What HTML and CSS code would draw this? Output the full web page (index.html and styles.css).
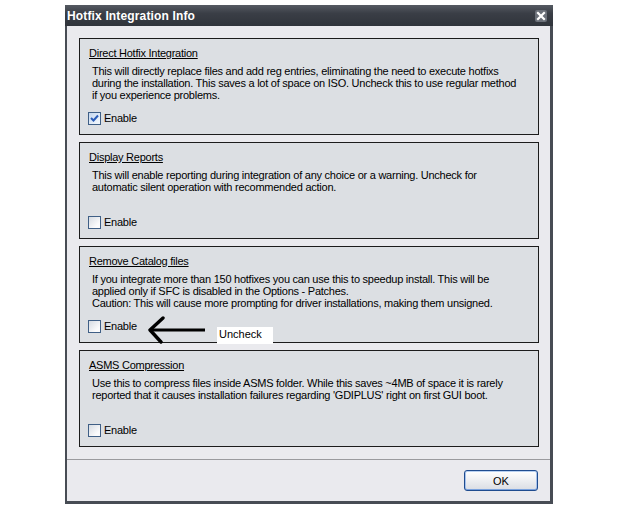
FILE: index.html
```html
<!DOCTYPE html>
<html>
<head>
<meta charset="utf-8">
<link rel="stylesheet" href="styles.css">
</head>
<body>
<div class="window">
  <div class="titlebar">
    <span class="title">Hotfix Integration Info</span>
    <span class="close"><svg width="12" height="12" viewBox="0 0 12 12"><path d="M3 3 L9 9 M9 3 L3 9" stroke="#fff" stroke-width="2.2" stroke-linecap="square"/></svg></span>
  </div>
  <div class="client">
    <div class="groups">
      <section class="group">
        <div class="group-title">Direct Hotfix Integration</div>
        <p class="desc">This will directly replace files and add reg entries, eliminating the need to execute hotfixs<br>during the installation. This saves a lot of space on ISO. Uncheck this to use regular method<br>if you experience problems.</p>
        <div class="check"><span class="cbox checked"><svg width="11" height="11" viewBox="0 0 11 11"><path d="M2 5 L4.5 7.5 L9 2.5" fill="none" stroke="#2a5cb8" stroke-width="2"/></svg></span><span>Enable</span></div>
      </section>
      <section class="group">
        <div class="group-title">Display Reports</div>
        <p class="desc">This will enable reporting during integration of any choice or a warning. Uncheck for<br>automatic silent operation with recommended action.</p>
        <div class="check"><span class="cbox"></span><span>Enable</span></div>
      </section>
      <section class="group annotated">
        <div class="group-title">Remove Catalog files</div>
        <p class="desc">If you integrate more than 150 hotfixes you can use this to speedup install. This will be<br>applied only if SFC is disabled in the Options - Patches.<br>Caution: This will cause more prompting for driver installations, making them unsigned.</p>
        <div class="check"><span class="cbox"></span><span>Enable</span></div>
        <svg class="arrow" width="62" height="28" viewBox="0 0 62 28"><path d="M4 14 L59 14" stroke="#000" stroke-width="3.2"/><path d="M17 2 L4 14 L15 26" fill="none" stroke="#000" stroke-width="3.4" stroke-linecap="round" stroke-linejoin="round"/></svg>
        <span class="note">Uncheck</span>
      </section>
      <section class="group">
        <div class="group-title">ASMS Compression</div>
        <p class="desc">Use this to compress files inside ASMS folder. While this saves ~4MB of space it is rarely<br>reported that it causes installation failures regarding 'GDIPLUS' right on first GUI boot.</p>
        <div class="check"><span class="cbox"></span><span>Enable</span></div>
      </section>
    </div>
    <div class="footer">
      <button class="btn">OK</button>
    </div>
  </div>
</div>
</body>
</html>
```
FILE: styles.css
```css
body {
  margin: 0;
  background: #fff;
  font-family: "Liberation Sans", Arial, sans-serif;
  font-size: 11px;
  color: #000;
}
.window {
  margin: 5px 0 0 65px;
  width: 488px;
  height: 499px;
  display: flex;
  flex-direction: column;
}
.titlebar {
  height: 21px;
  flex: none;
  background: linear-gradient(#555a62, #3a3e46 40%, #30343b);
  display: flex;
  align-items: center;
  justify-content: space-between;
  padding: 0 6px 0 2px;
}
.title {
  color: #fff;
  font-weight: bold;
  font-size: 12px;
  letter-spacing: 0.15px;
}
.close {
  width: 12px;
  height: 12px;
  background: #6b7079;
  border-radius: 2px;
  display: flex;
}
.client {
  flex: 1;
  background: #eaeaee;
  border-style: solid;
  border-color: #474c54;
  border-width: 0 3px 3px 2px;
  display: flex;
  flex-direction: column;
}
.groups {
  padding: 12px 11px 0 12px;
  display: flex;
  flex-direction: column;
  gap: 7px;
}
.group {
  position: relative;
  box-sizing: border-box;
  height: 97px;
  border: 1px solid #1c1c1c;
  background: #dcdfe3;
  padding: 8px 8px 9px 8px;
  display: flex;
  flex-direction: column;
  letter-spacing: -0.25px;
}
.group-title {
  margin-left: 1px;
  line-height: 13px;
  text-decoration: underline;
  text-underline-offset: 1px;
}
.desc {
  margin: 5px 0 0 4px;
  line-height: 12px;
}
.check {
  margin-top: auto;
  height: 13px;
  display: flex;
  align-items: center;
  gap: 3px;
  line-height: 13px;
}
.cbox {
  box-sizing: border-box;
  width: 13px;
  height: 13px;
  border: 1px solid #3f5f86;
  background: linear-gradient(135deg, #d6dbe2, #fbfbfc 75%);
  display: flex;
  align-items: center;
  justify-content: center;
}
.cbox.checked {
  background: linear-gradient(135deg, #c3d6ee, #eef4fb 80%);
}
.arrow {
  position: absolute;
  left: 66px;
  top: 69px;
}
.note {
  position: absolute;
  left: 137px;
  top: 80px;
  width: 56px;
  height: 17px;
  background: #fff;
  padding-left: 2px;
  box-sizing: border-box;
  line-height: 14px;
  letter-spacing: 0;
}
.footer {
  margin-top: 12px;
  border-top: 1px solid #9a9a9e;
  flex: 1;
  display: flex;
  justify-content: flex-end;
  align-items: flex-start;
  padding: 10px 12px 0 0;
}
.btn {
  width: 74px;
  height: 21px;
  border: 1px solid #1f4c8f;
  border-radius: 3px;
  background: linear-gradient(#ffffff, #f1f2f4 40%, #dadde3);
  box-shadow: inset 0 1px 0 #b9d1f1, inset 0 -1px 0 #7aa2de, inset 1px 0 0 #a6c2ec, inset -1px 0 0 #a6c2ec;
  font-family: "Liberation Sans", Arial, sans-serif;
  font-size: 11px;
  color: #000;
  padding: 0;
}
```
